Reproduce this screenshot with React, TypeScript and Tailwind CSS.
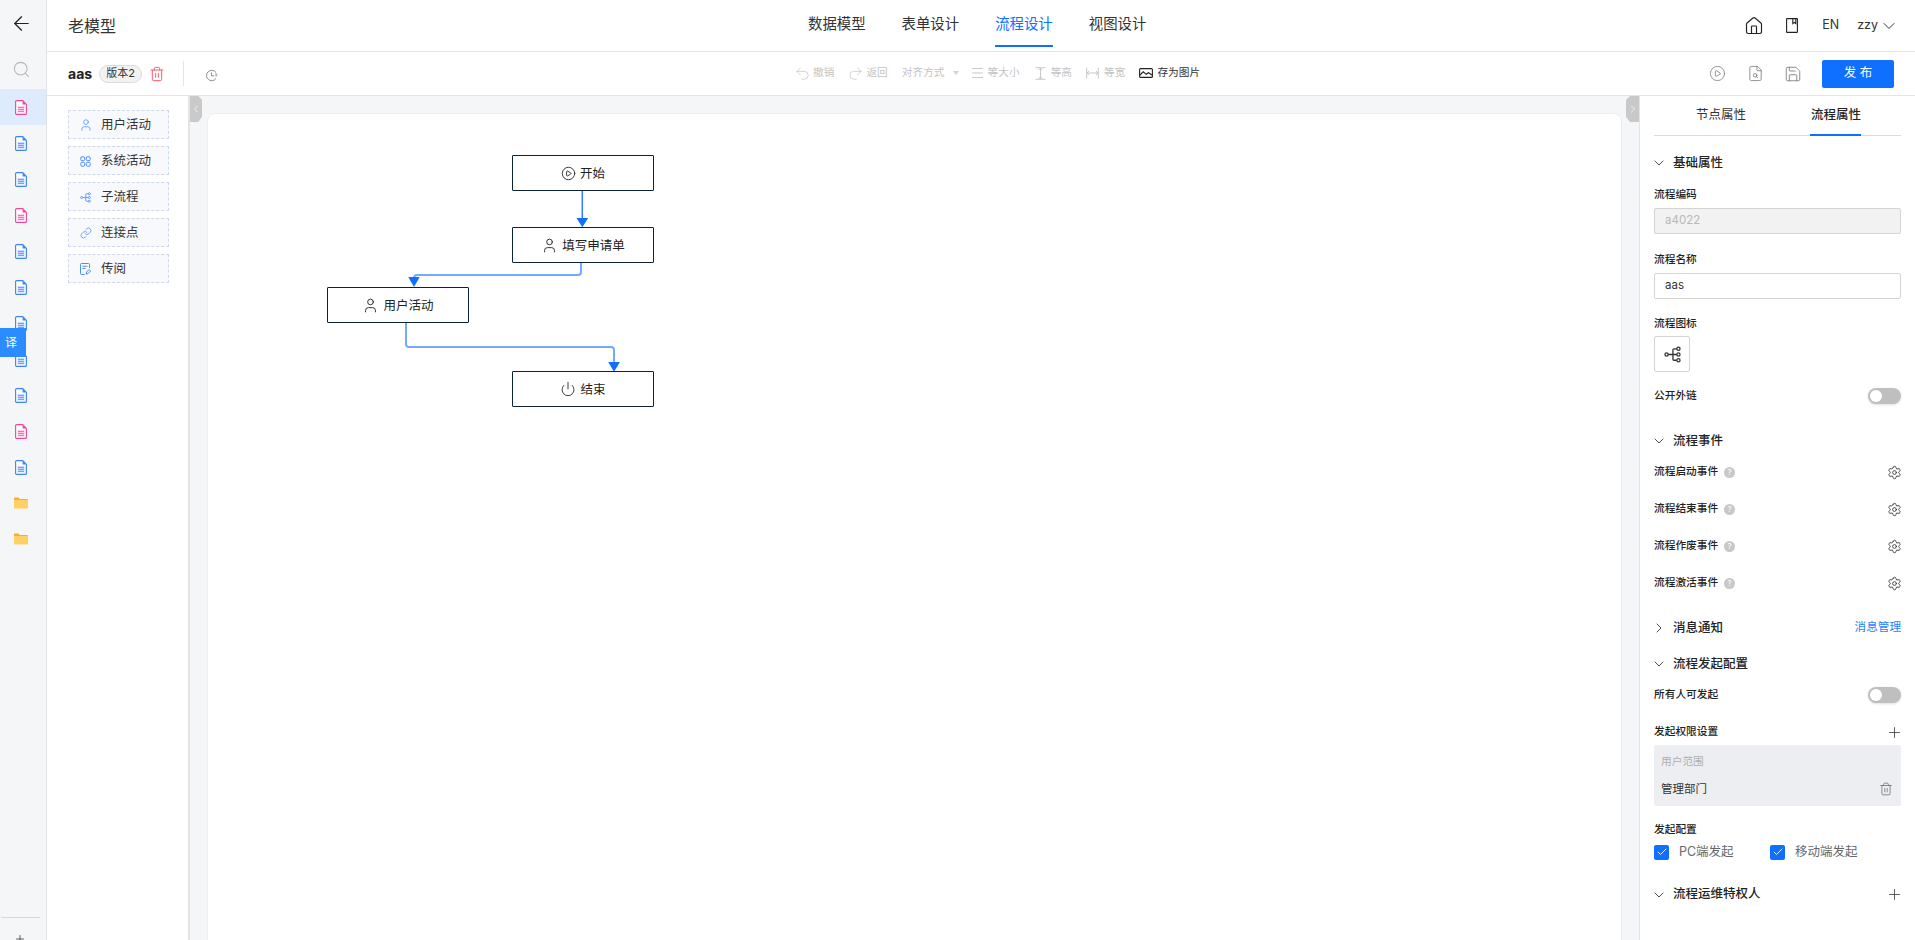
import { ReactNode } from "react";
import {
  ArrowLeft,
  Search,
  Trash2,
  Undo2,
  Redo2,
  Home,
  ChevronDown,
  ChevronRight,
  ChevronLeft,
  User,
  CirclePlay,
  Power,
  Settings,
  Plus,
  Check,
  Save,
  FileSearch,
  Link,
} from "lucide-react";

function DocIcon({ color, fill }: { color: string; fill: string }) {
  return (
    <svg width="12" height="15" viewBox="0 0 12 15" fill="none">
      <path d="M0.600 1.600a1 1 0 0 1 1-1h6.200l3.600 3.800v9a1 1 0 0 1-1 1h-8.800a1 1 0 0 1-1-1V1.600Z" fill="white" stroke={color} strokeWidth="1.100" />
      <rect x="1.500" y="6" width="9" height="7.500" fill={fill} opacity="0.300" />
      <path d="M7.600 0.800v3.800h3.700L7.600 0.800Z" fill={color} />
      <path d="M3 7.300h6M3 9.300h6M3 11.300h6" stroke={color} strokeWidth="0.900" />
    </svg>
  );
}

function FolderIcon() {
  return (
    <svg width="14" height="12" viewBox="0 0 14 12">
      <path d="M0 1.500a1 1 0 0 1 1-1h3.500l1.200 1.400h7.300a1 1 0 0 1 1 1V3.600H0V1.500Z" fill="#ffa92e" />
      <rect x="0" y="3" width="14" height="8.500" rx="0.800" fill="#ffd066" />
    </svg>
  );
}

function GridIcon() {
  return (
    <svg width="11" height="11" viewBox="0 0 11 11" fill="none" stroke="#4b8dff" strokeWidth="1">
      <rect x="0.800" y="0.800" width="3.900" height="3.900" rx="1.200" />
      <rect x="6.300" y="0.800" width="3.900" height="3.900" rx="1.200" />
      <rect x="0.800" y="6.300" width="3.900" height="3.900" rx="1.200" />
      <rect x="6.300" y="6.300" width="3.900" height="3.900" rx="1.200" />
    </svg>
  );
}

function FlowIcon({ size, color }: { size: number; color: string }) {
  return (
    <svg width={size} height={size} viewBox="0 0 16 16" fill="none" stroke={color} strokeWidth="1.200">
      <circle cx="2.400" cy="8" r="1.500" />
      <circle cx="13.600" cy="2.600" r="1.500" />
      <circle cx="13.600" cy="8" r="1.500" />
      <circle cx="13.600" cy="13.400" r="1.500" />
      <path d="M3.900 8h8.200M12.100 2.600H9.400a1 1 0 0 0-1 1v8.800a1 1 0 0 0 1 1h2.700" />
    </svg>
  );
}

function CirculateIcon() {
  return (
    <svg width="11" height="12" viewBox="0 0 11 12" fill="none" stroke="#4b8dff" strokeWidth="1">
      <path d="M9.500 5V1.500a1 1 0 0 0-1-1h-7a1 1 0 0 0-1 1v9a1 1 0 0 0 1 1h3" />
      <path d="M2.500 3.200h5M2.500 5.400h3" />
      <path d="M6.200 11.200 6.600 9l2.500-2.500 1.500 1.500L8.100 10.500 6.200 11.200Z" />
    </svg>
  );
}

function ClockDashIcon() {
  return (
    <svg width="13" height="13" viewBox="0 0 13 13" fill="none" stroke="#8c8c8c" strokeWidth="1">
      <path d="M11 3.500A5.200 5.200 0 1 0 11 9.500" />
      <path d="M6.500 3.500V6.800H9" />
      <path d="M10.300 5h2M10.300 6.800h2" />
    </svg>
  );
}

function SameSizeIcon() {
  return (
    <svg width="13" height="12" viewBox="0 0 13 12" stroke="#c9c9c9" fill="none">
      <path d="M1 1.500h11M1 6h11M1 10.500h11" />
    </svg>
  );
}

function SameHeightIcon() {
  return (
    <svg width="11" height="13" viewBox="0 0 11 13" stroke="#c9c9c9" fill="none">
      <path d="M0.500 0.700h10M0.500 12.300h10M5.500 1v11M3.500 3l2-2 2 2M3.500 10l2 2 2-2" />
    </svg>
  );
}

function SameWidthIcon() {
  return (
    <svg width="13" height="12" viewBox="0 0 13 12" stroke="#c9c9c9" fill="none">
      <path d="M0.700 0.500v11M12.300 0.500v11M1 6h11M3 4 1 6l2 2M10 4l2 2-2 2" />
    </svg>
  );
}

function PictureIcon() {
  return (
    <svg width="14" height="10" viewBox="0 0 14 10" fill="none" stroke="#222" strokeWidth="1.100">
      <rect x="0.600" y="0.600" width="12.800" height="8.800" rx="1" />
      <path d="M1 7 4.200 3.800 7.200 6.300 9.500 4.700 13 7" />
    </svg>
  );
}

function BookIcon() {
  return (
    <svg width="12" height="15" viewBox="0 0 12 15" fill="none" stroke="#222" strokeWidth="1.100">
      <rect x="0.600" y="0.600" width="10.800" height="13.800" rx="0.500" />
      <path d="M6.800 0.600v5l1.500-1.200 1.500 1.200v-5" />
    </svg>
  );
}

function ToolItem({ icon, label, dark, gap, className }: { icon: ReactNode; label: string; dark?: boolean; gap: string; className?: string }) {
  return (
    <div className={`flex items-center ${gap} ${className ?? ""}`}>
      {icon}
      <span className={`text-[10.7px] ${dark ? "text-[#333]" : "text-[#c4c4c4]"}`}>{label}</span>
    </div>
  );
}

const railItems = ["pink", "blue", "blue", "pink", "blue", "blue", "blue", "blue", "blue", "pink", "blue"];

function Rail() {
  return (
    <aside className="w-[47px] shrink-0 h-full bg-[#f5f6f8] border-r border-[#dfe1e5] flex flex-col overflow-hidden">
      <div className="h-[46px] flex items-center justify-center shrink-0 pr-[4px]">
        <ArrowLeft size={23} strokeWidth={1.300} className="text-[#222]" />
      </div>
      <div className="h-[43px] flex items-center justify-center shrink-0 pt-[3px] pr-[4px]">
        <Search size={19} strokeWidth={1.300} className="text-[#b5b5b5]" />
      </div>
      {railItems.map((c, i) => (
        <div key={i} className={`h-[36px] flex items-center justify-center shrink-0 pr-[4px] ${i === 0 ? "bg-[#deebfd]" : ""}`}>
          {c === "pink" ? <DocIcon color="#f0479b" fill="#f9b6d8" /> : <DocIcon color="#3f82f7" fill="#a9c8fb" />}
        </div>
      ))}
      <div className="h-[36px] flex items-center justify-center shrink-0 pr-[4px]">
        <FolderIcon />
      </div>
      <div className="h-[36px] flex items-center justify-center shrink-0 pr-[4px]">
        <FolderIcon />
      </div>
      <div className="mt-auto shrink-0 h-[23px] relative">
        <div className="mx-[1px] w-[39px] h-px bg-[#d6d8dc]" />
        <Plus size={12} strokeWidth={1.500} className="absolute left-[14px] top-[16px] text-[#333]" />
      </div>
    </aside>
  );
}

function TopHeader() {
  const tabs = ["数据模型", "表单设计", "流程设计", "视图设计"];
  return (
    <header className="h-[52px] shrink-0 bg-white border-b border-[#e3e4e6] flex items-center">
      <div className="w-[761px] shrink-0 pl-[21px] text-[16px] text-[#333]">老模型</div>
      <nav className="flex gap-[36px] h-full">
        {tabs.map((t, i) => (
          <div key={t} className={`relative flex items-center pb-[3px] text-[14.400px] ${i === 2 ? "text-[#0f6fff]" : "text-[#333]"}`}>
            {t}
            {i === 2 && <div className="absolute left-0 right-0 bottom-[4px] h-[2px] bg-[#0f6fff]" />}
          </div>
        ))}
      </nav>
      <div className="flex-1 flex items-center justify-end pr-[21px] text-[12.5px] text-[#333]">
        <Home size={20} strokeWidth={1.400} className="text-[#222]" />
        <div className="ml-[22px]">
          <BookIcon />
        </div>
        <span className="ml-[24px]">EN</span>
        <span className="ml-[18px]">zzy</span>
        <ChevronDown size={20} strokeWidth={1.200} className="ml-[1px] -mr-[5px]" />
      </div>
    </header>
  );
}

function Toolbar() {
  return (
    <div className="h-[44px] shrink-0 bg-white border-b border-[#e3e4e6] flex items-center">
      <div className="w-[749px] shrink-0 flex items-center pl-[21px]">
        <span className="text-[14px] font-bold text-[#222]">aas</span>
        <span className="ml-[7px] h-[18px] w-[43px] flex items-center justify-center rounded-full border border-[#dcdcdc] bg-[#f2f2f2] text-[11px] text-[#333]">
          版本2
        </span>
        <Trash2 size={16} strokeWidth={1.500} className="ml-[7px] text-[#ff5c66]" />
        <div className="ml-[18px] w-px h-[25px] bg-[#e3e4e6]" />
        <div className="ml-[21px] mt-[3px]">
          <ClockDashIcon />
        </div>
      </div>
      <div className="flex items-center">
        <ToolItem gap="gap-[4px]" icon={<Undo2 size={17} strokeWidth={1.100} className="text-[#c9c9c9] -mx-[2px]" />} label="撤销" />
        <ToolItem gap="gap-[4px]" className="ml-[15px]" icon={<Redo2 size={17} strokeWidth={1.100} className="text-[#c9c9c9] -mx-[2px]" />} label="返回" />
        <div className="ml-[14px] flex items-center gap-[8px]">
          <span className="text-[10.7px] text-[#c4c4c4]">对齐方式</span>
          <span className="w-0 h-0 border-x-[3.5px] border-x-transparent border-t-[4px] border-t-[#d4d4d4]" />
        </div>
        <ToolItem gap="gap-[4px]" className="ml-[12px]" icon={<SameSizeIcon />} label="等大小" />
        <ToolItem gap="gap-[5px]" className="ml-[15px]" icon={<SameHeightIcon />} label="等高" />
        <ToolItem gap="gap-[5px]" className="ml-[14px]" icon={<SameWidthIcon />} label="等宽" />
        <ToolItem gap="gap-[4px]" className="ml-[14px]" dark icon={<PictureIcon />} label="存为图片" />
      </div>
      <div className="flex-1 flex items-center justify-end pr-[21px]">
        <CirclePlay size={17} strokeWidth={1.100} className="text-[#777]" />
        <FileSearch size={17} strokeWidth={1.100} className="ml-[21px] text-[#777]" />
        <Save size={18} strokeWidth={1.100} className="ml-[20px] text-[#777]" />
        <button className="ml-[20px] w-[72px] h-[28px] bg-[#0f6fff] rounded-[2px] text-white text-[12.5px]">发 布</button>
      </div>
    </div>
  );
}

const palette: { label: string; icon: ReactNode }[] = [
  { label: "用户活动", icon: <User size={14} strokeWidth={1.300} className="text-[#4b8dff]" /> },
  { label: "系统活动", icon: <GridIcon /> },
  { label: "子流程", icon: <FlowIcon size={11} color="#4b8dff" /> },
  { label: "连接点", icon: <Link size={12} strokeWidth={1.500} className="text-[#4b8dff]" /> },
  { label: "传阅", icon: <CirculateIcon /> },
];

function Palette() {
  return (
    <div className="w-[143px] shrink-0 bg-white border-r-2 border-[#e3e4e6] pl-[21px] pt-[14px] flex flex-col gap-[7px]">
      {palette.map((p) => (
        <div
          key={p.label}
          className="w-[101px] h-[29px] border border-dashed border-[#cfd9e8] bg-[#f8f9fd] flex items-center pt-[1px] text-[12.5px] text-[#333]"
        >
          <span className="w-[32px] flex justify-center pl-[1px]">{p.icon}</span>
          {p.label}
        </div>
      ))}
    </div>
  );
}

function FlowNode({ label, icon, className }: { label: string; icon: ReactNode; className: string }) {
  return (
    <div
      className={`absolute w-[142px] h-[36px] bg-white border border-[#0b2233] rounded-[1px] flex items-center justify-center gap-[4px] pt-[2px] text-[12.5px] text-[#222] ${className}`}
    >
      {icon}
      {label}
    </div>
  );
}

function Canvas() {
  return (
    <div className="flex-1 min-w-0 relative bg-[#f5f6f8] px-[17px] pt-[17px] overflow-hidden">
      <div className="absolute left-0 top-0 w-[12px] h-[26px] bg-[#c9c9c9] [clip-path:polygon(0_0,70%_0,100%_15%,100%_80%,70%_100%,0_100%)] flex items-center justify-center">
        <ChevronLeft size={12} strokeWidth={1.500} className="text-white" />
      </div>
      <div className="absolute right-0 top-0 w-[13px] h-[26px] bg-[#c9c9c9] [clip-path:polygon(30%_0,100%_0,100%_100%,30%_100%,0_80%,0_15%)] flex items-center justify-center">
        <ChevronRight size={12} strokeWidth={1.500} className="text-white" />
      </div>
      <div className="relative h-[900px] bg-white rounded-lg border border-[#eceef1]">
        <svg className="absolute left-[1px] top-[1px]" width="700" height="320" fill="none">
          <path d="M373.300 76V106" stroke="#2f7dfb" strokeWidth="1.500" />
          <path d="M367.500 103h11.700l-5.850 9.300Z" fill="#0f6fff" />
          <path d="M372 148v9a3 3 0 0 1-3 3H208a3 3 0 0 0-3 3v4" stroke="#74a9fd" strokeWidth="2" />
          <path d="M199.300 162h11.400l-5.700 10Z" fill="#0f6fff" />
          <path d="M197 208v21a3 3 0 0 0 3 3h202a3 3 0 0 1 3 3v15" stroke="#74a9fd" strokeWidth="2" />
          <path d="M399.200 247h11.700l-5.850 9.700Z" fill="#0f6fff" />
        </svg>
        <FlowNode className="left-[304px] top-[41px]" label="开始" icon={<CirclePlay size={15} strokeWidth={1.400} className="-mt-[2px] [&>polygon]:fill-[#222] [&>path:last-child]:fill-[#222]" />} />
        <FlowNode className="left-[304px] top-[113px]" label="填写申请单" icon={<User size={17} strokeWidth={1.300} className="-mt-[2px]" />} />
        <FlowNode className="left-[119px] top-[173px]" label="用户活动" icon={<User size={17} strokeWidth={1.300} className="-mt-[2px]" />} />
        <FlowNode className="left-[304px] top-[257px]" label="结束" icon={<Power size={16} strokeWidth={1.300} className="-mt-[2px]" />} />
      </div>
    </div>
  );
}

function SectionHead({ title, open = true, className, right }: { title: string; open?: boolean; className: string; right?: ReactNode }) {
  return (
    <div className={`h-[20px] flex items-center text-[12.5px] font-medium text-[#222] ${className}`}>
      {open ? (
        <ChevronDown size={16} strokeWidth={1.300} className="-ml-[3px] mr-[6px] text-[#333]" />
      ) : (
        <ChevronRight size={16} strokeWidth={1.300} className="-ml-[3px] mr-[6px] text-[#333]" />
      )}
      <span className="flex-1">{title}</span>
      {right}
    </div>
  );
}

function Label({ children, className }: { children: ReactNode; className: string }) {
  return <div className={`h-[16px] flex items-center text-[10.7px] font-medium text-[#222] ${className}`}>{children}</div>;
}

function Toggle() {
  return (
    <div className="w-[33px] h-[16px] rounded-full bg-[#bfbfbf] p-[2px] shadow-sm">
      <div className="w-[12px] h-[12px] rounded-full bg-white" />
    </div>
  );
}

function EventRow({ title, className }: { title: string; className: string }) {
  return (
    <div className={`h-[16px] flex items-center justify-between ${className}`}>
      <div className="flex items-center gap-[6px] text-[10.7px] font-medium text-[#222]">
        {title}
        <span className="w-[11px] h-[11px] rounded-full bg-[#c8c8c8] text-white text-[8px] font-normal flex items-center justify-center">?</span>
      </div>
      <Settings size={15} strokeWidth={1.400} className="text-[#333] -mr-[1px]" />
    </div>
  );
}

function CheckBox() {
  return (
    <span className="w-[15px] h-[15px] bg-[#0f6fff] rounded-[2px] flex items-center justify-center">
      <Check size={12} strokeWidth={1.800} className="text-white" />
    </span>
  );
}

function PropsPanel() {
  return (
    <aside className="w-[276px] shrink-0 bg-white border-l border-[#e3e4e6] px-[14px] flex flex-col overflow-hidden">
      <div className="h-[40px] shrink-0 flex border-b border-[#dcdcdc] text-[12.5px] text-[#333]">
        <div className="w-[114px] flex items-center justify-center pl-[20px]">节点属性</div>
        <div className="w-[114px] relative ml-[11px] flex items-center justify-center font-medium text-[#222]">
          流程属性
          <div className="absolute bottom-[-1px] left-[31px] w-[51px] h-[2px] bg-[#0f6fff]" />
        </div>
      </div>
      <SectionHead title="基础属性" className="mt-[17px]" />
      <Label className="mt-[14px]">流程编码</Label>
      <div className="mt-[5px] h-[26px] border border-[#d4d4d4] bg-[#f2f2f2] rounded-[2px] flex items-center pl-[10px] text-[11.5px] text-[#b8b8b8]">a4022</div>
      <Label className="mt-[18px]">流程名称</Label>
      <div className="mt-[5px] h-[26px] border border-[#d4d4d4] rounded-[2px] flex items-center pl-[10px] text-[11.5px] text-[#333]">aas</div>
      <Label className="mt-[17px]">流程图标</Label>
      <div className="mt-[4px] w-[36px] h-[36px] border border-[#d4d4d4] rounded-[2px] flex items-center justify-center">
        <FlowIcon size={17} color="#333" />
      </div>
      <div className="mt-[16px] flex items-center justify-between">
        <Label className="">公开外链</Label>
        <Toggle />
      </div>
      <SectionHead title="流程事件" className="mt-[27px]" />
      <EventRow title="流程启动事件" className="mt-[13px]" />
      <EventRow title="流程结束事件" className="mt-[21px]" />
      <EventRow title="流程作废事件" className="mt-[21px]" />
      <EventRow title="流程激活事件" className="mt-[21px]" />
      <SectionHead
        title="消息通知"
        open={false}
        className="mt-[27px]"
        right={<span className="text-[11.6px] font-normal text-[#1f7fff]">消息管理</span>}
      />
      <SectionHead title="流程发起配置" className="mt-[16px]" />
      <div className="mt-[13px] flex items-center justify-between">
        <Label className="">所有人可发起</Label>
        <Toggle />
      </div>
      <div className="mt-[21px] h-[16px] flex items-center justify-between">
        <Label className="">发起权限设置</Label>
        <Plus size={17} strokeWidth={1.100} className="text-[#333] -mr-[2px]" />
      </div>
      <div className="mt-[5px] h-[61px] bg-[#edeef1] rounded-[2px] pl-[7px] pr-[8px] pt-[9px]">
        <div className="text-[10.7px] text-[#b0b0b0] leading-[16px]">用户范围</div>
        <div className="mt-[11px] flex items-center justify-between text-[11.5px] text-[#333] leading-[16px]">
          管理部门
          <Trash2 size={14} strokeWidth={1.100} className="text-[#555]" />
        </div>
      </div>
      <Label className="mt-[16px]">发起配置</Label>
      <div className="mt-[5px] flex items-center text-[12.5px] text-[#666]">
        <CheckBox />
        <span className="ml-[10px] w-[91px]">PC端发起</span>
        <CheckBox />
        <span className="ml-[10px]">移动端发起</span>
      </div>
      <SectionHead
        title="流程运维特权人"
        className="mt-[23px]"
        right={<Plus size={17} strokeWidth={1.100} className="text-[#333] -mr-[2px]" />}
      />
    </aside>
  );
}

export default function App() {
  return (
    <div className="w-[1915px] h-[940px] flex overflow-hidden relative bg-white font-['Inter','Noto_Sans_CJK_SC',sans-serif]">
      <Rail />
      <div className="flex-1 min-w-0 flex flex-col">
        <TopHeader />
        <Toolbar />
        <div className="flex-1 min-h-0 flex">
          <Palette />
          <Canvas />
          <PropsPanel />
        </div>
      </div>
      <div className="absolute left-0 top-[328px] w-[26px] h-[29px] pr-[4px] bg-[#2b8cff] flex items-center justify-center text-white text-[12px]">译</div>
    </div>
  );
}
